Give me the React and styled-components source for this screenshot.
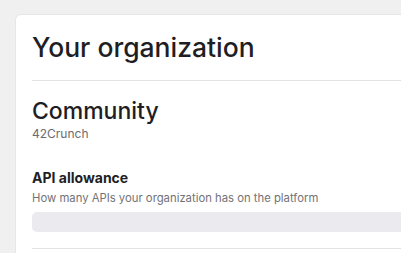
import React from "react"
import styled, { createGlobalStyle } from "styled-components"

const GlobalStyle = createGlobalStyle`
  html, body {
    margin: 0;
    padding: 0;
    background: #f0f0f0;
    font-family: Inter, "Noto Sans", sans-serif;
    color: #1e1e24;
    overflow: hidden;
  }
`

const Page = styled.div`
  padding: 15px 0 0 16px;
  height: 253px;
  box-sizing: border-box;
  overflow: hidden;
`

const Card = styled.section`
  background: #fff;
  border-radius: 5px 0 0 0;
  padding: 0 0 40px 16px;
  box-shadow: 0 0 0 1px #e6e6e6;
`

const Header = styled.div`
  padding: 16px 0 17px;
  border-bottom: 1px solid #e3e3e6;
  h1 {
    margin: 0;
    font-size: 26.5px;
    line-height: 32px;
    font-weight: 500;
  }
`

const Plan = styled.div`
  padding-top: 15px;
  h2 {
    margin: 0;
    font-size: 23px;
    line-height: 30px;
    font-weight: 500;
  }
  p {
    margin: 0;
    font-size: 12px;
    line-height: 16px;
    color: #6b6b70;
  }
`

const Section = styled.div`
  padding-top: 27px;
  padding-bottom: 16px;
  border-bottom: 1px solid #e3e3e6;
  h3 {
    margin: 0;
    font-size: 14px;
    line-height: 18px;
    font-weight: 700;
  }
  p {
    margin: 3px 0 0;
    font-size: 11.3px;
    line-height: 16px;
    color: #727277;
  }
`

const Bar = styled.div`
  margin-top: 6px;
  height: 20px;
  border-radius: 5px 0 0 5px;
  background: #ebebef;
`

export default function App() {
  return (
    <Page>
      <GlobalStyle />
      <Card>
        <Header>
          <h1>Your organization</h1>
        </Header>
        <Plan>
          <h2>Community</h2>
          <p>42Crunch</p>
        </Plan>
        <Section>
          <h3>API allowance</h3>
          <p>How many APIs your organization has on the platform</p>
          <Bar />
        </Section>
      </Card>
    </Page>
  )
}
